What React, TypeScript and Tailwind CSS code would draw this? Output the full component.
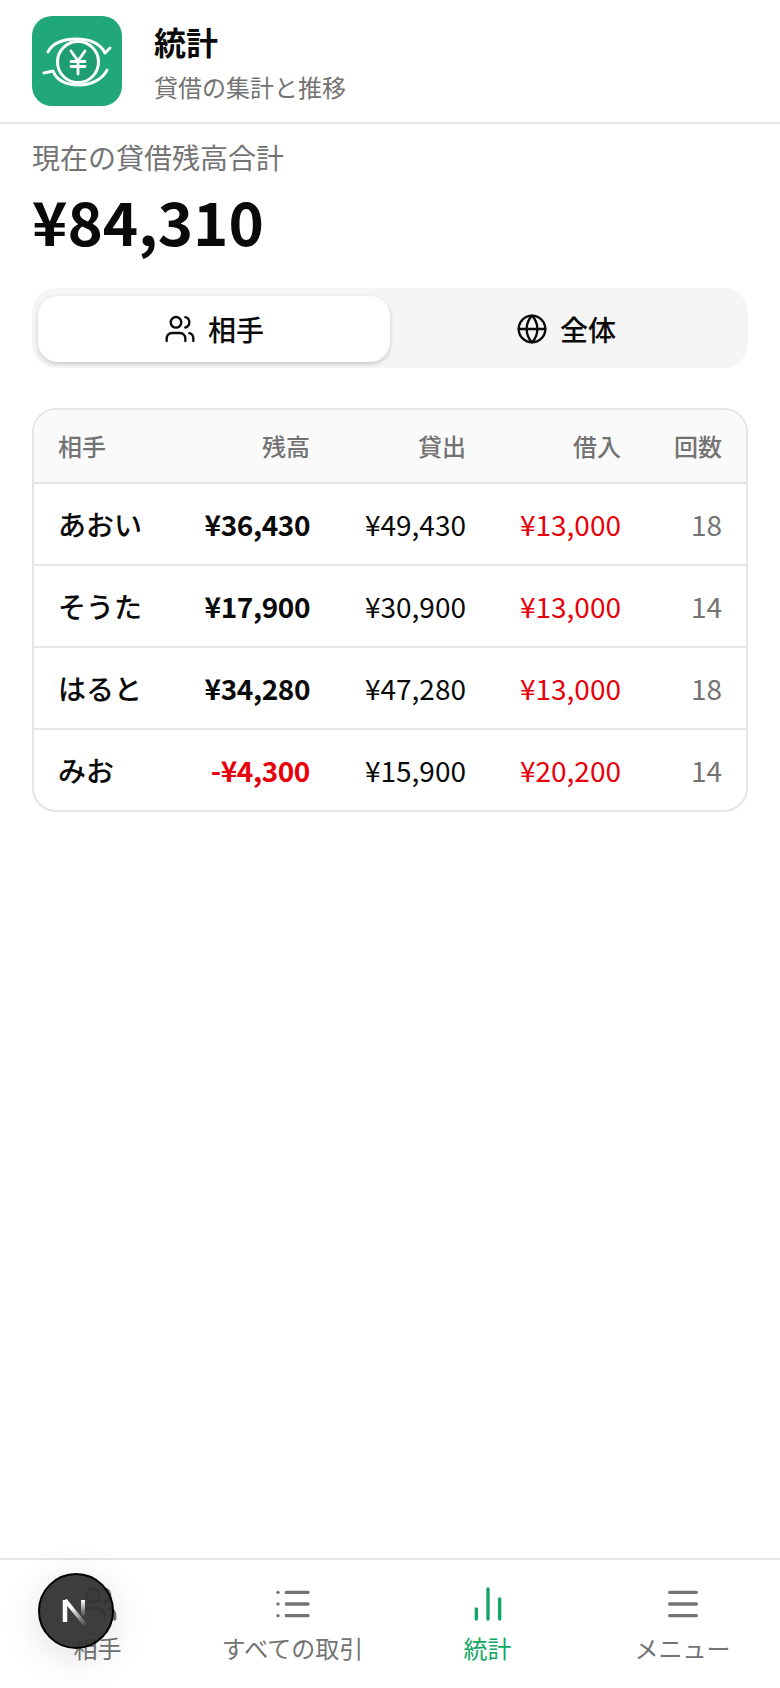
import { ChartNoAxesColumn, Globe, List, Menu, Users } from 'lucide-react';

const rows = [
  { name: 'あおい', balance: '¥36,430', lent: '¥49,430', borrowed: '¥13,000', count: 18 },
  { name: 'そうた', balance: '¥17,900', lent: '¥30,900', borrowed: '¥13,000', count: 14 },
  { name: 'はると', balance: '¥34,280', lent: '¥47,280', borrowed: '¥13,000', count: 18 },
  { name: 'みお', balance: '-¥4,300', lent: '¥15,900', borrowed: '¥20,200', count: 14 },
];

const gridCols = 'grid grid-cols-[106px_146px_156px_155px_101px] items-center pl-6 pr-6';

function AppIcon() {
  return (
    <div className="flex h-[90px] w-[90px] shrink-0 items-center justify-center rounded-[20px] bg-[#21a87a]">
      <svg width="90" height="90" viewBox="0 0 90 90" fill="none" stroke="white" strokeLinecap="round" strokeLinejoin="round">
        <circle cx="46" cy="46" r="20.5" strokeWidth="3" fill="#1f9d72" />
        <path d="M16 36 C20 27 32 23 44 23 C57 23 68 27 73 37 L78 32" strokeWidth="3" />
        <path d="M75 54 C71 63 59 69 47 69 C34 69 25 65 21 55 L12 57" strokeWidth="3" />
        <path d="M39 35 L46 45 L53 35 M46 45 V58 M39 45.5 H53 M39 50.5 H53" strokeWidth="2.8" />
      </svg>
    </div>
  );
}

function NavItem({ label, active, children }: { label: string; active?: boolean; children: React.ReactNode }) {
  return (
    <div className={`flex flex-col items-center gap-[8px] ${active ? 'text-[#0ea763]' : 'text-[#737373]'}`}>
      {children}
      <span className="text-[24px] leading-[32px]">{label}</span>
    </div>
  );
}

export default function App() {
  return (
    <div className="flex min-h-[1688px] flex-col bg-white text-[#0a0a0a] font-['Noto_Sans_CJK_JP','Noto_Sans',sans-serif]">
      {/* Header */}
      <header className="flex h-[124px] items-start gap-[32px] border-b-2 border-[#e5e5e5] pl-[32px] pt-[16px]">
        <AppIcon />
        <div className="pt-[4px]">
          <h1 className="text-[32px] font-bold leading-[42px]">統計</h1>
          <p className="mt-[8px] text-[24px] leading-[34px] text-[#737373]">貸借の集計と推移</p>
        </div>
      </header>

      <main className="flex-1 px-[32px]">
        <p className="mt-[13px] text-[28px] leading-[40px] text-[#737373]">現在の貸借残高合計</p>
        <p className="mt-[3px] mb-[28px] text-[60px] font-bold leading-[80px]">¥84,310</p>

        {/* Tabs */}
        <div className="grid h-[80px] grid-cols-2 rounded-[24px] bg-[#f5f5f5] px-[6px] pb-[6px] pt-[8px]">
          <div className="flex items-center justify-center gap-[12px] rounded-[20px] bg-white text-[28px] font-medium shadow-[0_2px_4px_rgba(0,0,0,0.18)]">
            <Users size={32} strokeWidth={1.75} />
            <span>相手</span>
          </div>
          <div className="flex items-center justify-center gap-[12px] rounded-[20px] text-[28px] font-medium">
            <Globe size={32} strokeWidth={1.75} />
            <span>全体</span>
          </div>
        </div>

        {/* Table */}
        <div className="mt-[40px] overflow-hidden rounded-[24px] border-2 border-[#e5e5e5]">
          <div className={`${gridCols} h-[74px] border-b-2 border-[#e5e5e5] bg-[#fafafa] text-[24px] font-medium text-[#737373]`}>
            <span>相手</span>
            <span className="text-right">残高</span>
            <span className="text-right">貸出</span>
            <span className="text-right">借入</span>
            <span className="text-right">回数</span>
          </div>
          {rows.map((row, i) => (
            <div
              key={row.name}
              className={`${gridCols} text-[28px] ${i < rows.length - 1 ? 'h-[82px] border-b-2 border-[#e5e5e5]' : 'h-[80px]'}`}
            >
              <span className="whitespace-nowrap font-medium">{row.name}</span>
              <span className={`text-right font-bold tracking-[-0.4px] ${row.balance.startsWith('-') ? 'text-[#e7000b]' : ''}`}>{row.balance}</span>
              <span className="text-right">{row.lent}</span>
              <span className="text-right text-[#e7000b]">{row.borrowed}</span>
              <span className="text-right text-[#737373]">{row.count}</span>
            </div>
          ))}
        </div>
      </main>

      {/* Bottom nav */}
      <nav className="relative grid h-[130px] grid-cols-4 border-t-2 border-[#e5e5e5] pt-[24px]">
        <NavItem label="相手"><Users size={40} strokeWidth={2} /></NavItem>
        <NavItem label="すべての取引"><List size={40} strokeWidth={2} /></NavItem>
        <NavItem label="統計" active><ChartNoAxesColumn size={40} strokeWidth={2} /></NavItem>
        <NavItem label="メニュー"><Menu size={40} strokeWidth={2} /></NavItem>

        {/* dev indicator */}
        <div className="absolute left-[38px] top-[13px] flex h-[76px] w-[76px] items-center justify-center rounded-full border-2 border-black bg-[#333333]/95 shadow-[0_8px_40px_rgba(0,0,0,0.12)]">
          <svg width="36" height="36" viewBox="0 0 36 36" fill="none">
            <defs>
              <linearGradient id="nFade" x1="14" y1="14" x2="28" y2="33" gradientUnits="userSpaceOnUse">
                <stop stopColor="white" />
                <stop offset="1" stopColor="white" stopOpacity="0" />
              </linearGradient>
              <linearGradient id="nBar" x1="24" y1="7" x2="24" y2="24" gradientUnits="userSpaceOnUse">
                <stop stopColor="white" />
                <stop offset="1" stopColor="white" stopOpacity="0" />
              </linearGradient>
            </defs>
            <path d="M7 29V7" stroke="white" strokeWidth="4.5" />
            <path d="M7 7L29 34" stroke="url(#nFade)" strokeWidth="4" />
            <path d="M25 7V24" stroke="url(#nBar)" strokeWidth="4" />
          </svg>
        </div>
      </nav>
    </div>
  );
}
